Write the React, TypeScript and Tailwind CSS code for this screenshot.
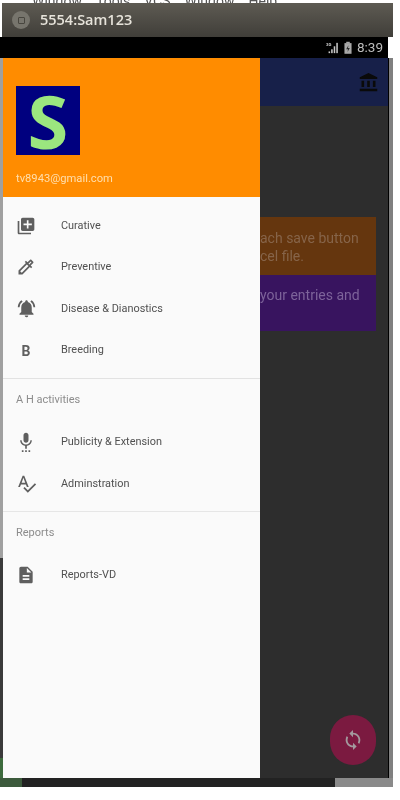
import React from "react";
import {
  MdLibraryAdd,
  MdOutlineColorize,
  MdNotificationsActive,
  MdSettingsVoice,
  MdSpellcheck,
  MdDescription,
  MdAccountBalance,
  MdSync,
} from "react-icons/md";

const roboto = "font-['Roboto',sans-serif]";

function Item({ icon, label }: { icon: React.ReactNode; label: string }) {
  return (
    <div className="flex h-[41.6px] items-center">
      <div className="mr-[12px] flex w-[46px] items-center justify-center text-[#5f5f5f]">{icon}</div>
      <span className="text-[10.9px] text-[#505050]">{label}</span>
    </div>
  );
}

function Section({ label }: { label: string }) {
  return (
    <div className="flex h-[42px] items-center pl-[13px] text-[11px] text-[#8c8c8c]">{label}</div>
  );
}

export default function App() {
  return (
    <div className={`flex h-[800px] w-[400px] flex-col overflow-hidden bg-white blur-[0.6px] ${roboto}`}>
      <div className="h-[3px] overflow-hidden whitespace-nowrap pl-[32px] text-[14px] leading-[3px] text-[#555555]">
        <span className="mr-[14px]">Window</span>
        <span className="mr-[14px]">Tools</span>
        <span className="mr-[14px]">VCS</span>
        <span className="mr-[14px]">Window</span>
        <span>Help</span>
      </div>

      <div className="ml-[2px] flex h-[34px] w-[391px] items-center bg-gradient-to-b from-[#5e5b53] to-[#403e39] pl-[10px]">
        <div className="flex h-[18px] w-[18px] items-center justify-center rounded-full bg-[#77756d]">
          <div className="h-[7px] w-[7px] rounded-[1px] border border-[#48463f]" />
        </div>
        <span className="ml-[10px] font-['Open_Sans',sans-serif] text-[14.5px] font-semibold text-[#e6e3da]">5554:Sam123</span>
      </div>

      <div className="flex h-[21px] w-[388px] items-center justify-end bg-black pr-[5px] text-[#bdbdbd]">
        <svg width="12" height="14" viewBox="0 0 14 14" fill="#c8c8c8" className="mr-[6px]">
          <text x="0" y="5" fontSize="5" fontWeight="700" fill="#d0d0d0">3G</text>
          <rect x="3" y="11" width="1.8" height="2" />
          <rect x="6" y="8.5" width="1.8" height="4.5" />
          <rect x="9" y="5" width="1.8" height="8" />
          <rect x="12" y="1" width="1.8" height="12" />
        </svg>
        <svg width="8" height="14" viewBox="0 0 9 14" className="mr-[5px]">
          <rect x="2.5" y="0" width="4" height="2" fill="#a8a8a8" />
          <rect x="0.5" y="1.5" width="8" height="12" fill="#a8a8a8" />
          <path d="M5 4 L2.5 8.5 H4.5 L4 11.5 L6.5 7 H4.5 Z" fill="#2a2a2a" />
        </svg>
        <span className="text-[13.5px]">8:39</span>
      </div>

      <div className="flex h-[720px] w-[393px]">
        <div className="flex w-[3px] shrink-0 flex-col">
          <div className="h-[500px] bg-[#a0a0a0]" />
          <div className="h-[200px] bg-[#3a3a3a]" />
          <div className="flex-1 bg-[#3d6b3d]" />
        </div>

        <div className="w-[257px] shrink-0 bg-[#fafafa]">
          <div className="flex h-[139px] flex-col bg-[#ff8c00] pl-[13px]">
            <div className="mt-[28px] flex h-[69px] w-[64px] items-center justify-center overflow-hidden bg-[#00007f] font-['Open_Sans',sans-serif] text-[74px] font-bold leading-none text-[#9be67f]">
              S
            </div>
            <div className="mt-[17px] text-[11.2px] leading-[14px] text-[#ffdfae]">tv8943@gmail.com</div>
          </div>

          <div className="pt-[8px]">
            <Item icon={<MdLibraryAdd size={20} />} label="Curative" />
            <Item icon={<MdOutlineColorize size={20} />} label="Preventive" />
            <Item icon={<MdNotificationsActive size={21} />} label="Disease & Dianostics" />
            <Item icon={<span className="text-[14px] font-bold leading-none">B</span>} label="Breeding" />
          </div>
          <div className="mt-[7px] h-px bg-[#e2e2e2]" />
          <Section label="A H activities" />
          <Item icon={<MdSettingsVoice size={20} />} label="Publicity & Extension" />
          <Item icon={<MdSpellcheck size={21} />} label="Adminstration" />
          <div className="mt-[6px] h-px bg-[#e6e6e6]" />
          <div className="pt-[1px]">
            <Section label="Reports" />
          </div>
          <Item icon={<MdDescription size={20} />} label="Reports-VD" />
        </div>

        <div className="relative w-[128px] shrink-0 overflow-hidden bg-[#2d2d2d]">
          <div className="flex h-[48px] items-center justify-end bg-[#172049] pr-[9px] text-[#0a0a0a]">
            <MdAccountBalance size={21} />
          </div>

          <div className="mr-[12px] mt-[111px] whitespace-nowrap text-[14px] leading-[18px]">
            <div className="h-[58px] bg-[#65360e] pt-[12px] text-[#866449]">
              <div>ach save button</div>
              <div>cel file.</div>
            </div>
            <div className="h-[56px] bg-[#38145f] pt-[11px] text-[#7d639a]">
              <div>your entries and</div>
            </div>
          </div>

          <div className="absolute bottom-[13px] right-[12px] flex h-[50px] w-[46px] items-center justify-center rounded-full bg-[#7b1a40] text-[#a39a9e]">
            <MdSync size={22} />
          </div>
        </div>

        <div className="w-px shrink-0 bg-black" />
        <div className="w-[4px] shrink-0 bg-[#808080]" />
      </div>

      <div className="flex h-[9px] w-[393px]">
        <div className="w-[22px] bg-[#3c5a3c]" />
        <div className="w-[313px] bg-[#222222]" />
        <div className="flex-1 bg-[#8a8a8a]" />
      </div>
    </div>
  );
}
